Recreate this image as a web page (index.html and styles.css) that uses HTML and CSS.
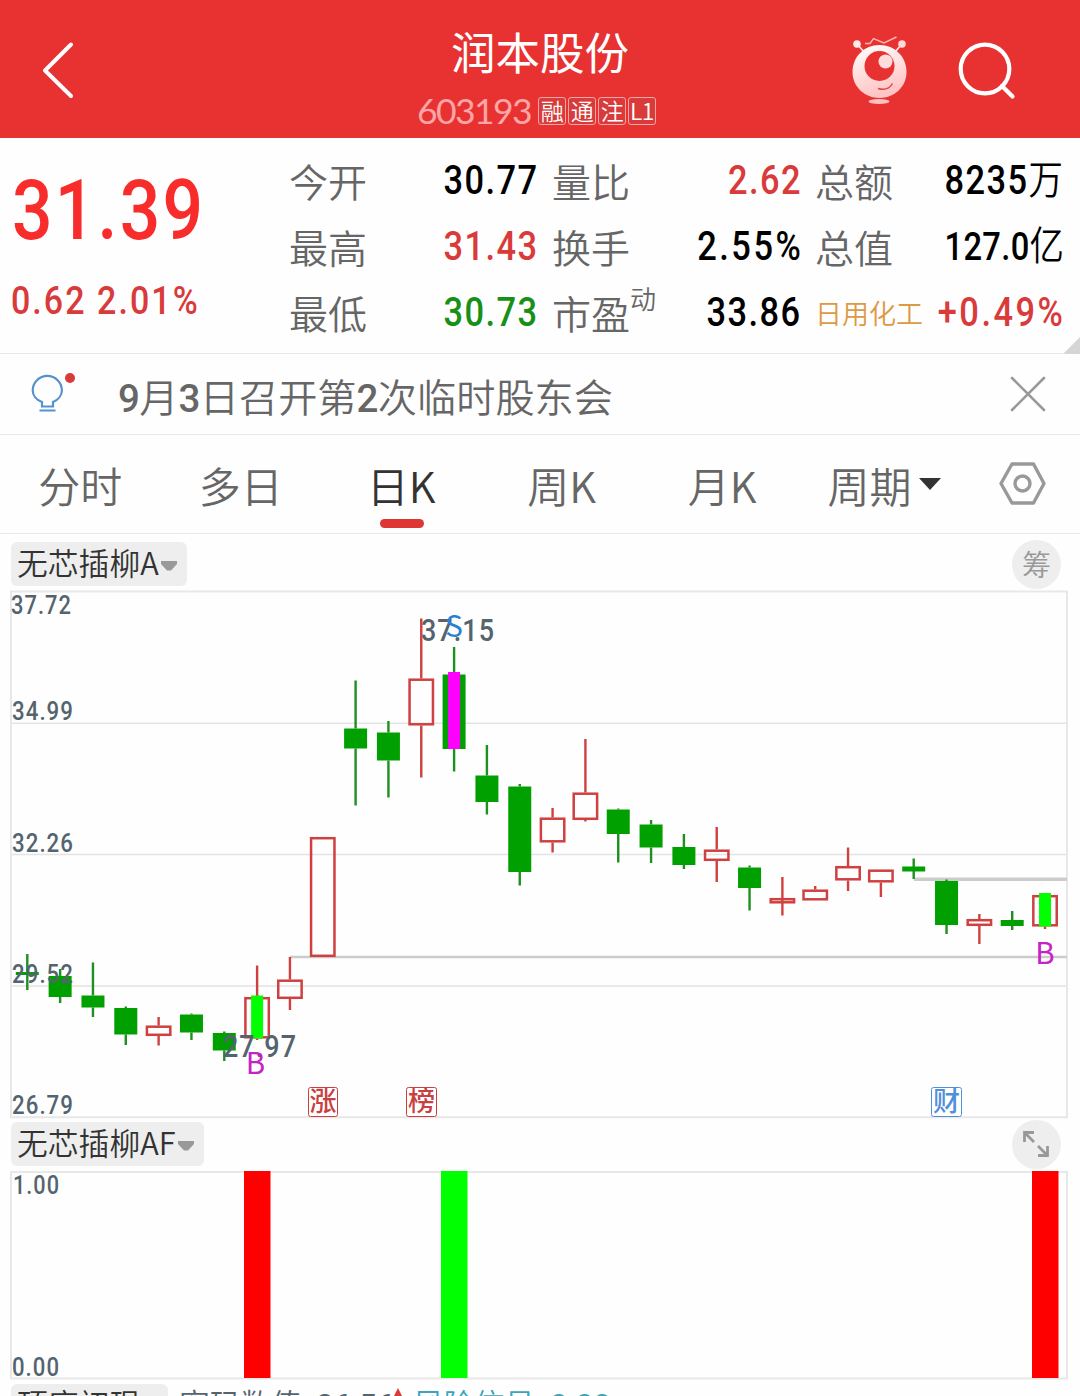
FILE: index.html
```html
<!DOCTYPE html>
<html lang="zh-CN">
  <head>
    <meta charset="UTF-8" />
    <meta name="viewport" content="width=device-width, initial-scale=1" />
    <title>润本股份 603193</title>
    <link rel="stylesheet" href="styles.css">
  </head>
  <body>
    <!-- Header -->
    <header class="header">
      <svg class="back-icon" width="34" height="60" viewBox="0 0 34 60"><path d="M31 4.500 L5 30.500 L31 56" /></svg>
      <div class="stock">
        <div class="stock-name">润本股份</div>
        <div class="stock-code">
          <span class="code">603193</span>
          <span class="tag">融</span><span class="tag">通</span><span class="tag">注</span><span class="tag">L1</span>
        </div>
      </div>
      <div class="header-icons">
        <svg class="robot-icon" width="60" height="72" viewBox="0 0 60 72">
          <defs>
            <linearGradient id="body" x1="0" y1="0" x2="0.3" y2="1">
              <stop offset="0" stop-color="#fff" />
              <stop offset="1" stop-color="#ffc4c4" />
            </linearGradient>
          </defs>
          <path d="M8 12 L14 19 M51 12 L45 19" stroke="#ffe4e4" stroke-width="1.8" />
          <path d="M15 10.500 L20 10.500 L23.500 5.500 L34 10 L46.500 4" fill="none" stroke="#ffb4b4" stroke-width="1.4" />
          <circle cx="7" cy="11" r="3.8" fill="#ffeaea" />
          <circle cx="52" cy="11" r="3.8" fill="#ffd8d8" />
          <path d="M29.500 12 C45 12 56.500 24 56.500 39 C56.500 54 44 65 29.500 65 C15 65 2.500 54 2.500 39 C2.500 24 14 12 29.500 12 Z" fill="url(#body)" />
          <circle cx="29.500" cy="33" r="15" fill="#e83131" />
          <circle cx="35.500" cy="28.500" r="7" fill="#ffdcdc" />
          <path d="M28 55.500 Q38 58.500 42.500 50.500" fill="none" stroke="#e04848" stroke-width="1.5" />
          <ellipse cx="29" cy="68.500" rx="10.500" ry="2.500" fill="#ffc0c0" />
        </svg>
        <svg class="search-icon" width="60" height="60" viewBox="0 0 60 60"><circle cx="28" cy="29" r="24.300" /><path d="M45 46 L55.500 56.500" /></svg>
      </div>
    </header>

    <!-- Quote -->
    <section class="quote">
      <div class="price-box">
        <div class="price"><span class="num">31.39</span></div>
        <div class="change"><span class="num">0.62 2.01%</span></div>
      </div>
      <div class="cell"><label>今开</label><span class="num">30.77</span></div>
      <div class="cell"><label>量比</label><span class="num red">2.62</span></div>
      <div class="cell"><label>总额</label><span class="num">8235<i>万</i></span></div>
      <div class="cell"><label>最高</label><span class="num red">31.43</span></div>
      <div class="cell"><label>换手</label><span class="num percent">2.55%</span></div>
      <div class="cell"><label>总值</label><span class="num small">127.0<i>亿</i></span></div>
      <div class="cell"><label>最低</label><span class="num green">30.73</span></div>
      <div class="cell"><label>市盈<sup>动</sup></label><span class="num">33.86</span></div>
      <div class="cell"><label class="industry">日用化工</label><span class="num percent red">+0.49%</span></div>
      <span class="corner"></span>
    </section>

    <!-- Notice -->
    <section class="notice">
      <svg class="bulb-icon" width="46" height="44" viewBox="0 0 46 44">
        <path d="M12 34.500 L12 30 C6.500 28 2.700 23.500 2.700 18.500 A14.600 14.600 0 0 1 31.900 18.500 C31.900 23.500 28 28 23 30 L23 34.500 Z M9.500 38.500 L25.500 38.500" />
        <circle cx="40" cy="6" r="5" />
      </svg>
      <p><b>9</b>月<b>3</b>日召开第<b>2</b>次临时股东会</p>
      <svg class="close-icon" width="36" height="36" viewBox="0 0 36 36"><path d="M2 2 L34 34 M34 2 L2 34" /></svg>
    </section>

    <!-- Period tabs -->
    <nav class="tabs">
      <a class="tab">分时</a>
      <a class="tab">多日</a>
      <a class="tab active">日K</a>
      <a class="tab">周K</a>
      <a class="tab">月K</a>
      <a class="tab more">周期<span class="arrow"></span></a>
      <svg class="setting-icon" width="48" height="44" viewBox="0 0 48 44"><path d="M13 2 L34.500 2 L45 21.500 L34.500 41 L13 41 L2 21.500 Z" /><circle cx="23.500" cy="21.500" r="7.500" /></svg>
    </nav>

    <!-- K line chart -->
    <div class="toolbar">
      <span class="pill">无芯插柳A<svg width="18" height="12" viewBox="0 0 18 12"><path d="M1 1 H17 V4 L11 10.500 H7 L1 4 Z" /></svg></span>
      <span class="round">筹</span>
    </div>
    <svg class="chart" id="kline" width="1080" height="529" viewBox="0 590 1080 529">
      <path class="grid" d="M11 723.300 H1067 M11 854.500 H1067 M11 986 H1067" />
      <path class="frame" d="M11 591.500 H1067 V1117.300 H11 Z" />
      <path class="gap-line" d="M290 957 H1067" />
      <path class="gap-line thick" d="M914 879.300 H1067" />
      <g id="candles"></g>
      <g class="axis">
        <text x="11" y="614" textLength="61" lengthAdjust="spacingAndGlyphs">37.72</text>
        <text x="12" y="720" textLength="62" lengthAdjust="spacingAndGlyphs">34.99</text>
        <text x="12" y="852" textLength="62" lengthAdjust="spacingAndGlyphs">32.26</text>
        <text x="12" y="983" textLength="62" lengthAdjust="spacingAndGlyphs">29.52</text>
        <text x="12" y="1114" textLength="62" lengthAdjust="spacingAndGlyphs">26.79</text>
      </g>
      <g class="peak">
        <text x="421" y="640.500" textLength="74" lengthAdjust="spacingAndGlyphs">37.15</text>
        <text x="223" y="1056.500" textLength="74" lengthAdjust="spacingAndGlyphs">27.97</text>
      </g>
      <text class="mark sell" x="454" y="637">S</text>
      <text class="mark" x="255.500" y="1074">B</text>
      <text class="mark" x="1045" y="964">B</text>
      <g class="event">
        <rect x="308.500" y="1087.500" width="29" height="29" rx="2" /><text x="323" y="1111">涨</text>
        <rect x="406.500" y="1087.500" width="30" height="29" rx="2" /><text x="421.500" y="1111">榜</text>
      </g>
      <g class="event finance">
        <rect x="931.500" y="1087.500" width="30" height="29" rx="2" /><text x="946.500" y="1111">财</text>
      </g>
    </svg>

    <!-- Signal chart -->
    <div class="toolbar second">
      <span class="pill">无芯插柳AF<svg width="18" height="12" viewBox="0 0 18 12"><path d="M1 1 H17 V4 L11 10.500 H7 L1 4 Z" /></svg></span>
      <span class="round"><svg width="28" height="28" viewBox="0 0 28 28"><path d="M3.500 13 V3.500 H13 M4 4 L13 13 M26.500 17 V26.500 H17 M26 26 L17 17" /></svg></span>
    </div>
    <svg class="chart" width="1080" height="210" viewBox="0 1170 1080 210">
      <path class="frame" d="M11 1172 H1067 V1378.500 H11 Z" />
      <rect x="244" y="1171" width="26.500" height="207" fill="#f00" />
      <rect x="441" y="1171" width="26.500" height="207" fill="#0f0" />
      <rect x="1032" y="1171" width="26.500" height="207" fill="#f00" />
      <g class="axis">
        <text x="13" y="1194" textLength="47" lengthAdjust="spacingAndGlyphs">1.00</text>
        <text x="12" y="1376" textLength="48" lengthAdjust="spacingAndGlyphs">0.00</text>
      </g>
    </svg>

    <!-- Next indicator -->
    <div class="toolbar third">
      <span class="pill">顶底初现</span>
      <span class="value">密码数值: <b>26.56</b></span>
      <svg class="up" width="12" height="18" viewBox="0 0 12 18"><path d="M6 0 L11 10 H8 V18 H4 V10 H1 Z" /></svg>
      <span class="value risk">风险信号: <b>0.00</b></span>
    </div>

    <script src="chart.js"></script>
  </body>
</html>
```

FILE: styles.css
```css
* { box-sizing: border-box; }
body {
  margin: 0;
  width: 1080px;
  height: 1396px;
  overflow: hidden;
  background: #fefefe;
  color: #666;
  font-family: "Noto Sans CJK SC", sans-serif;
  font-weight: 350;
}
svg { display: block; flex: none; }

/* header */
.header {
  height: 138px;
  display: grid;
  grid-template-columns: 240px 1fr 240px;
  background: #e83131;
  color: #fff;
}
.back-icon {
  margin: 40px 0 0 40px;
  fill: none;
  stroke: #fff;
  stroke-width: 4;
  stroke-linecap: round;
  stroke-linejoin: round;
}
.stock { text-align: center; }
.stock-name {
  margin-top: 20px;
  font-size: 44.5px;
  line-height: 62px;
  font-weight: 400;
}
.stock-code {
  display: flex;
  justify-content: center;
  align-items: center;
  gap: 2px;
  height: 32px;
  margin: 13px 7px 0 0;
}
.code {
  margin: -2px 5px 0 0;
  font-family: Lato, sans-serif;
  font-size: 35.5px;
  font-weight: 400;
  letter-spacing: -1.6px;
  color: #ffa5a5;
}
.tag {
  width: 28px;
  height: 28px;
  border: 1px solid #f8a5a5;
  border-radius: 3px;
  background: #d93a3a;
  font-size: 23px;
  line-height: 25px;
  letter-spacing: -0.5px;
}
.header-icons { display: flex; }
.robot-icon { margin: 33px 0 0 10px; }
.search-icon {
  margin: 40px 0 0 47px;
  fill: none;
  stroke: #fff;
  stroke-width: 4.2;
  stroke-linecap: round;
}

/* quote */
.quote {
  position: relative;
  height: 216px;
  padding-top: 11px;
  display: grid;
  grid-template-columns: 289px 249px 263px 262px;
  grid-template-rows: repeat(3, 66px);
  border-bottom: 1px solid #e8e8e8;
}
.price-box { grid-row: 1 / 4; }
.num {
  display: inline-block;
  margin-right: -1px;
  font-family: Roboto, "Noto Sans CJK SC", sans-serif;
  font-weight: 500;
  letter-spacing: 1.7px;
  white-space: nowrap;
  transform: scaleX(0.86);
  transform-origin: right center;
  color: #000;
}
.num i {
  font-style: normal;
  font-weight: 350;
  font-size: 40px;
}
.price .num, .change .num { transform-origin: left center; }
.price .num {
  margin: 12px 0 0 12px;
  font-size: 83px;
  line-height: 100px;
  letter-spacing: 2.6px;
  color: #f92c2c;
}
.change .num {
  margin: 16px 0 0 11px;
  font-size: 39.5px;
  line-height: 48px;
  letter-spacing: 2.4px;
  color: #d93a3a;
}
.cell {
  display: flex;
  justify-content: space-between;
  height: 66px;
  line-height: 62px;
}
.cell:nth-child(3n + 3), .cell:nth-child(3n + 4) { padding-left: 14px; }
.cell label { font-size: 39px; white-space: nowrap; }
.cell .num { font-size: 40px; line-height: 63px; }
.cell .small { font-size: 38px; letter-spacing: 0.4px; }
.cell .percent { letter-spacing: 2.9px; margin-right: -2px; }
.cell .red { color: #d93a3a; }
.cell .green { color: #189018; }
.cell .industry {
  margin-right: -30px;
  font-size: 27px;
  line-height: 64px;
  color: #dd9a45;
}
.cell sup {
  font-size: 26px;
  line-height: 0;
  vertical-align: 20px;
}
.corner {
  position: absolute;
  right: 0;
  bottom: -1px;
  border-left: 17px solid transparent;
  border-bottom: 17px solid #d5d5d5;
}

/* notice */
.notice {
  height: 81px;
  display: flex;
  border-bottom: 1px solid #e8e8e8;
}
.notice p {
  flex: 1;
  margin: 0 0 0 42px;
  font-size: 39.2px;
  line-height: 83px;
}
.notice b {
  font-family: Roboto, sans-serif;
  font-size: 38.5px;
  font-weight: 500;
  letter-spacing: -0.6px;
}
.bulb-icon { margin: 18px 0 0 30px; }
.bulb-icon path { fill: none; stroke: #5590cf; stroke-width: 2.2; }
.bulb-icon circle { fill: #d93a3a; }
.close-icon {
  margin: 22px 34px 0 0;
  fill: none;
  stroke: #999;
  stroke-width: 2.6;
  stroke-linecap: round;
}

/* tabs */
.tabs {
  height: 99px;
  display: flex;
  border-bottom: 1px solid #e8e8e8;
}
.tab {
  width: 160.5px;
  font-size: 42px;
  line-height: 100px;
  text-align: center;
  white-space: nowrap;
}
.active { color: #333; }
.active::after {
  content: "";
  display: block;
  width: 44px;
  height: 9px;
  margin: -16px auto 0 59px;
  border-radius: 5px;
  background: #de3535;
}
.more {
  display: flex;
  width: 197px;
  padding-left: 25px;
}
.arrow {
  width: 0;
  height: 0;
  margin: 43px 0 0 7px;
  border: 11px solid transparent;
  border-top: 12px solid #333;
  border-bottom: 0;
}
.setting-icon {
  margin: 27px 0 0 -1px;
  fill: none;
  stroke: #999;
  stroke-width: 3.4;
  stroke-linejoin: round;
}

/* toolbars */
.toolbar {
  height: 56px;
  padding: 6px 19px 0 11px;
  display: flex;
  justify-content: space-between;
}
.pill {
  display: flex;
  height: 44px;
  padding: 0 9px 0 6px;
  margin-top: 2px;
  border-radius: 6px;
  background: #eee;
  font-size: 30.8px;
  line-height: 39px;
  color: #333;
}
.pill svg { margin: 18px 0 0 1px; fill: #999; }
.round {
  width: 49px;
  height: 49px;
  border-radius: 50%;
  background: #eee;
  font-size: 29px;
  line-height: 47px;
  text-align: center;
  color: #999;
}
.round svg { margin: 9px; fill: none; stroke: #999; stroke-width: 2.8; }
.second { height: 51px; padding-top: 1px; }

/* charts */
.frame { fill: none; stroke: #e8e8e8; stroke-width: 2; }
.grid { stroke: #e4e4e4; stroke-width: 1.4; }
.gap-line { stroke: #ccc; stroke-width: 2.4; }
.thick { stroke-width: 3.4; }
.axis, .peak {
  fill: #54646f;
  font-family: Roboto, sans-serif;
  font-size: 25.5px;
  font-weight: 500;
  letter-spacing: 1.2px;
}
.peak { font-size: 30.5px; }
.mark {
  font-size: 29.5px;
  font-weight: 400;
  text-anchor: middle;
  fill: #c424c4;
}
.sell { fill: #2c80d0; }
.event rect { fill: #fff; stroke: #c84040; }
.event text {
  fill: #c84040;
  font-size: 27px;
  font-weight: 500;
  text-anchor: middle;
}
.finance rect { stroke: #5090d8; }
.finance text { fill: #5090d8; }
.up-body { fill: none; stroke: #cf4040; stroke-width: 2.5; }
.up-wick { stroke: #cf4040; stroke-width: 2.4; }
.down-body { fill: #00a000; }
.down-wick { stroke: #1f8f1f; stroke-width: 2.4; }

/* next indicator */
.third {
  padding-top: 4px;
  justify-content: flex-start;
  height: 60px;
}
.third .pill {
  margin: 0;
  padding-right: 28px;
  line-height: 38px;
}
.value {
  margin-left: 11px;
  font-size: 30.5px;
  line-height: 38px;
  color: #54646f;
  white-space: nowrap;
}
.value b { font-family: Roboto, sans-serif; font-weight: 500; }
.risk, .risk b { color: #3aa6b9; }
.risk { margin-left: 9px; }
.up { margin: 4px 0 0 -2px; fill: #d93a3a; }
```

FILE: chart.js
```js
// [high, body top, body bottom, low, rising]
const candles = [
  [954, 972, 975, 990, 0],
  [969, 976, 997, 1003, 0],
  [962.5, 995.5, 1007.5, 1017, 0],
  [1006.5, 1008, 1034.5, 1045, 0],
  [1017, 1025.5, 1036, 1045.5, 1],
  [1013.5, 1014.5, 1032.5, 1040, 0],
  [1031.5, 1033, 1050.5, 1061, 0],
  [965.5, 997, 1038.5, 1040, 1],
  [957, 979.5, 999, 1010, 1],
  [837, 837, 957, 957, 1],
  [680.5, 728.5, 748.5, 805.5, 0],
  [721, 732.5, 760.5, 797.5, 0],
  [618.5, 678.5, 725.5, 777.5, 1],
  [647, 674.5, 749, 771.5, 0],
  [745, 775.5, 802, 814.5, 0],
  [784, 786.5, 872, 885.5, 0],
  [808, 817.5, 842.5, 852.5, 1],
  [739, 792.5, 820, 821.5, 1],
  [808.5, 809.5, 834, 862.5, 0],
  [820, 824.5, 847.5, 863, 0],
  [834, 847, 865, 869, 0],
  [827, 849.5, 861, 882, 1],
  [865.5, 867.5, 888, 910.5, 0],
  [877, 898, 903.5, 915.5, 1],
  [886, 889.5, 900.5, 900.5, 1],
  [847.5, 866, 880.5, 891, 1],
  [869.5, 869.5, 882.5, 897, 1],
  [858.5, 866.5, 871.5, 879, 0],
  [879.5, 881, 925, 934, 0],
  [914, 919, 926, 944, 1],
  [911, 920, 926, 930, 0],
  [893, 895, 926.5, 929, 1]
];

// buy / sell signal bars: index, top, bottom, color
const signals = [
  [7, 995.5, 1038.5, "#0f0"],
  [13, 672, 749, "#f0f"],
  [31, 893, 926.5, "#0f0"]
];

const xOf = (i) => 27.3 + i * 32.83;
let html = "";

candles.forEach(([high, top, bottom, low, up], i) => {
  const x = xOf(i);
  const name = up ? "up" : "down";
  // doji candles keep the wick through the thin body
  const wick = bottom - top < 6 ? `M${x} ${high} V${low}` : `M${x} ${high} V${top} M${x} ${bottom} V${low}`;
  html += `<path class="${name}-wick" d="${wick}" />`;
  if (up) {
    html += `<rect class="up-body" x="${x - 11.7}" y="${top + 1.2}" width="23.4" height="${bottom - top - 2.4}" />`;
  } else {
    html += `<rect class="down-body" x="${x - 11.5}" y="${top}" width="23" height="${bottom - top}" />`;
  }
});

signals.forEach(([i, top, bottom, color]) => {
  html += `<rect x="${xOf(i) - 6}" y="${top}" width="12" height="${bottom - top}" fill="${color}" />`;
});

document.getElementById("candles").innerHTML = html;
```
